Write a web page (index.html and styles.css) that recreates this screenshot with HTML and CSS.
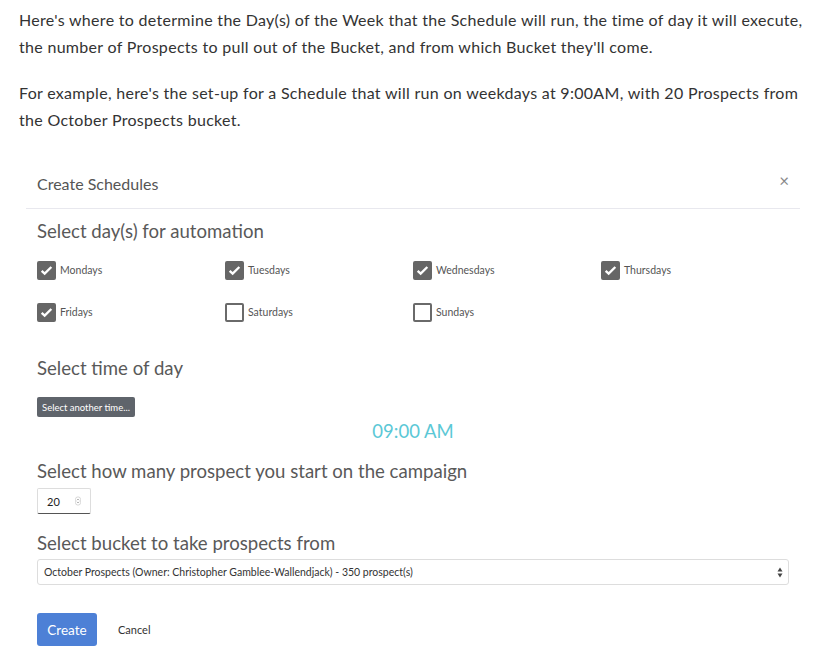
FILE: index.html
```html
<!DOCTYPE html>
<html lang="en">
<head>
    <meta charset="UTF-8">
    <meta name="viewport" content="width=device-width, initial-scale=1.0">
    <title>Create Schedules</title>
    <link rel="stylesheet" href="styles.css">
</head>
<body>
    <div class="page">
        <p class="intro">Here's where to determine the Day(s) of the Week that the Schedule will run, the time of day it will execute, the number of Prospects to pull out of the Bucket, and from which Bucket they'll come.</p>
        <p class="intro">For example, here's the set-up for a Schedule that will run on weekdays at 9:00AM, with 20 Prospects from the October Prospects bucket.</p>

        <div class="modal">
            <div class="modal-header">
                <h4>Create Schedules</h4>
                <span class="close">&times;</span>
            </div>
            <div class="modal-body">
                <h3>Select day(s) for automation</h3>
                <div class="days">
                    <label class="day"><span class="box checked"><svg viewBox="0 0 18 18"><path d="M3.2 9.4l3.6 3.4L14.8 4.8" fill="none" stroke="#fff" stroke-width="2.8"/></svg></span>Mondays</label>
                    <label class="day"><span class="box checked"><svg viewBox="0 0 18 18"><path d="M3.2 9.4l3.6 3.4L14.8 4.8" fill="none" stroke="#fff" stroke-width="2.8"/></svg></span>Tuesdays</label>
                    <label class="day"><span class="box checked"><svg viewBox="0 0 18 18"><path d="M3.2 9.4l3.6 3.4L14.8 4.8" fill="none" stroke="#fff" stroke-width="2.8"/></svg></span>Wednesdays</label>
                    <label class="day"><span class="box checked"><svg viewBox="0 0 18 18"><path d="M3.2 9.4l3.6 3.4L14.8 4.8" fill="none" stroke="#fff" stroke-width="2.8"/></svg></span>Thursdays</label>
                    <label class="day"><span class="box checked"><svg viewBox="0 0 18 18"><path d="M3.2 9.4l3.6 3.4L14.8 4.8" fill="none" stroke="#fff" stroke-width="2.8"/></svg></span>Fridays</label>
                    <label class="day"><span class="box"></span>Saturdays</label>
                    <label class="day"><span class="box"></span>Sundays</label>
                </div>

                <h3 class="time-title">Select time of day</h3>
                <button class="btn-time">Select another time...</button>
                <div class="time">09:00 AM</div>

                <h3 class="count-title">Select how many prospect you start on the campaign</h3>
                <div class="number">
                    <span>20</span>
                    <svg class="spin" viewBox="0 0 8 12"><rect x="0.5" y="0.5" width="7" height="11" rx="3.5" fill="none" stroke="#ccc"/><path d="M2.5 5l1.5-1.6L5.5 5M2.5 7l1.5 1.6L5.5 7" fill="none" stroke="#888" stroke-width="0.9"/></svg>
                </div>

                <h3 class="bucket-title">Select bucket to take prospects from</h3>
                <div class="select">
                    <span>October Prospects (Owner: Christopher Gamblee-Wallendjack) - 350 prospect(s)</span>
                    <svg viewBox="0 0 6 11"><path d="M3 0.5L5.5 4.5H0.5z M3 10.5L0.5 6.5H5.5z" fill="#444"/></svg>
                </div>

                <div class="actions">
                    <button class="btn-create">Create</button>
                    <button class="btn-cancel">Cancel</button>
                </div>
            </div>
        </div>
    </div>
</body>
</html>
```

FILE: styles.css
```css
body {
    margin: 0;
    padding: 0;
    background: #fff;
    font-family: 'Lato', sans-serif;
}

.page {
    padding: 6px 19px 0;
}

.intro {
    margin: 0 0 19px;
    font-size: 16px;
    line-height: 27px;
    letter-spacing: 0.3px;
    color: #333;
}

.modal {
    margin: 25px 0 0 7px;
    width: 774px;
}

.modal-header {
    display: flex;
    justify-content: space-between;
    align-items: center;
    padding: 15px 11px 13px;
    border-bottom: 1px solid #e8e8ee;
}

.modal-header h4 {
    margin: 0;
    font-size: 16px;
    line-height: 22px;
    font-weight: 400;
    color: #555;
}

.close {
    font-size: 17px;
    line-height: 22px;
    color: #888;
    margin-top: -6px;
}

.modal-body {
    padding: 9px 11px 0;
}

h3 {
    margin: 0;
    font-size: 18.6px;
    line-height: 26px;
    font-weight: 400;
    color: #595959;
}

.days {
    display: grid;
    grid-template-columns: repeat(4, 1fr);
    row-gap: 22px;
    margin-top: 16px;
}

.day {
    display: flex;
    align-items: center;
    gap: 4px;
    height: 20px;
    font-size: 10.5px;
    color: #555;
}

.box {
    width: 15px;
    height: 15px;
    border: 2px solid #6a6a6a;
    border-radius: 2px;
    background: #fff;
    display: flex;
}

.box.checked {
    background: #666;
    border-color: #666;
}

.box svg {
    width: 15px;
    height: 15px;
}

.time-title {
    margin-top: 33px;
}

.btn-time {
    display: block;
    margin-top: 16px;
    height: 20px;
    padding: 0 5px;
    border: none;
    border-radius: 2px;
    background: #5f646b;
    color: #fff;
    font-family: inherit;
    font-size: 9.5px;
}

.time {
    margin-top: 1px;
    text-align: center;
    font-size: 18.5px;
    line-height: 26px;
    color: #5bc8d6;
}

.count-title {
    margin-top: 14px;
}

.number {
    margin-top: 4px;
    width: 54px;
    height: 26px;
    box-sizing: border-box;
    display: flex;
    align-items: center;
    justify-content: space-between;
    padding: 0 9px;
    border: 1px solid #ddd;
    border-bottom: 1px solid #555;
    border-radius: 2px;
    font-size: 11px;
    color: #222;
}

.spin {
    width: 6px;
    height: 10px;
}

.bucket-title {
    margin-top: 16px;
}

.select {
    margin-top: 3px;
    height: 26px;
    box-sizing: border-box;
    display: flex;
    align-items: center;
    justify-content: space-between;
    padding: 0 5px 0 6px;
    border: 1px solid #ddd;
    border-radius: 3px;
    font-size: 10.5px;
    color: #333;
}

.select svg {
    width: 6px;
    height: 11px;
}

.actions {
    display: flex;
    align-items: center;
    gap: 21px;
    margin-top: 28px;
}

.btn-create {
    height: 33px;
    width: 60px;
    padding: 0;
    border: none;
    border-radius: 3px;
    background: #4d80d6;
    color: #fff;
    font-family: inherit;
    font-size: 13.5px;
}

.btn-cancel {
    border: none;
    background: none;
    padding: 0;
    color: #333;
    font-family: inherit;
    font-size: 11px;
}
```
